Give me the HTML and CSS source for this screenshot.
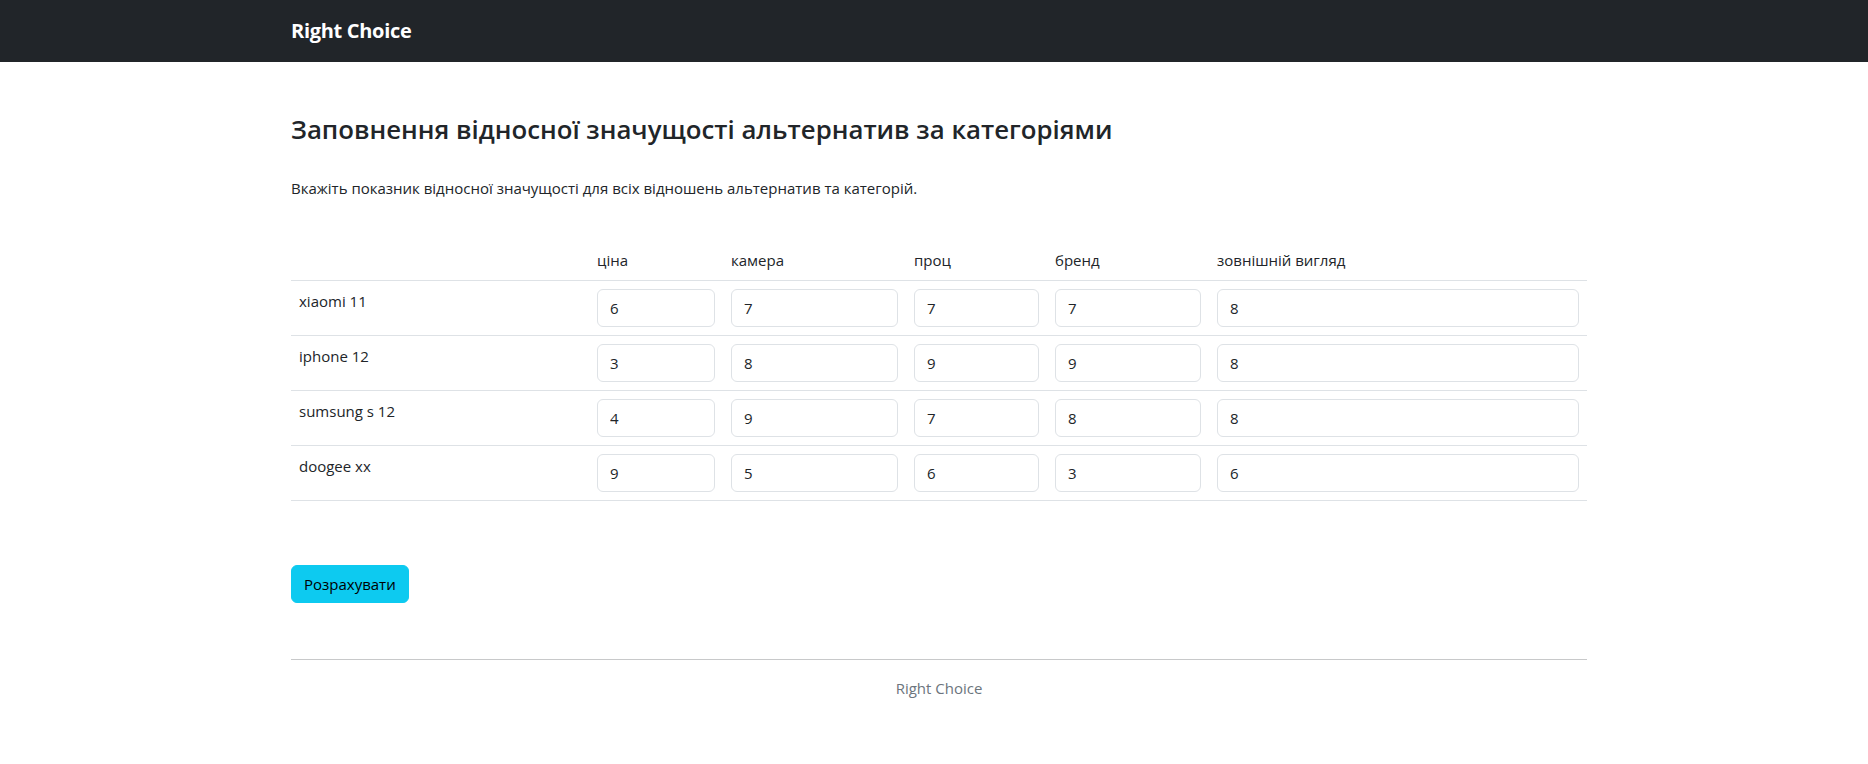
FILE: index.html
```html
<!DOCTYPE html>
<html lang="uk">
<head>
<meta charset="utf-8">
<title>Right Choice</title>
<link rel="stylesheet" href="styles.css">
</head>
<body>
<nav class="navbar">
  <div class="container navbar-inner">
    <a class="brand" href="#">Right Choice</a>
  </div>
</nav>
<main class="container main">
  <h3 class="title">Заповнення відносної значущості альтернатив за категоріями</h3>
  <p class="lead-text">Вкажіть показник відносної значущості для всіх відношень альтернатив та категорій.</p>
  <table class="grid">
    <colgroup>
      <col class="c-name"><col class="c-1"><col class="c-2"><col class="c-3"><col class="c-4"><col class="c-5">
    </colgroup>
    <thead>
      <tr><td></td><td>ціна</td><td>камера</td><td>проц</td><td>бренд</td><td>зовнішній вигляд</td></tr>
    </thead>
    <tbody>
      <tr><td>xiaomi 11</td><td><input class="field" value="6"></td><td><input class="field" value="7"></td><td><input class="field" value="7"></td><td><input class="field" value="7"></td><td><input class="field" value="8"></td></tr>
      <tr><td>iphone 12</td><td><input class="field" value="3"></td><td><input class="field" value="8"></td><td><input class="field" value="9"></td><td><input class="field" value="9"></td><td><input class="field" value="8"></td></tr>
      <tr><td>sumsung s 12</td><td><input class="field" value="4"></td><td><input class="field" value="9"></td><td><input class="field" value="7"></td><td><input class="field" value="8"></td><td><input class="field" value="8"></td></tr>
      <tr><td>doogee xx</td><td><input class="field" value="9"></td><td><input class="field" value="5"></td><td><input class="field" value="6"></td><td><input class="field" value="3"></td><td><input class="field" value="6"></td></tr>
    </tbody>
  </table>
  <button class="btn-info" type="button">Розрахувати</button>
</main>
<footer class="container footer">
  <hr class="rule">
  <p class="footer-text">Right Choice</p>
</footer>
</body>
</html>
```
FILE: styles.css
```css
* { box-sizing: border-box; }
body {
  margin: 0;
  font-family: "Open Sans", "Noto Sans", sans-serif;
  font-size: 15px;
  line-height: 24px;
  color: #212529;
  background: #fff;
}
.container {
  width: 1296px;
  margin-left: calc(50% - 643px);
}
.navbar {
  background: #212529;
  height: 62px;
}
.navbar-inner {
  height: 62px;
  display: flex;
  align-items: center;
}
.brand {
  color: #fff;
  text-decoration: none;
  font-size: 20px;
  font-weight: 700;
  line-height: 30px;
  letter-spacing: -0.3px;
}
.main {
  padding-top: 50px;
}
.title {
  margin: 0;
  font-size: 25.8px;
  line-height: 34px;
  font-weight: 600;
}
.lead-text {
  margin: 30px 0 0;
}
.grid {
  width: 100%;
  table-layout: fixed;
  border-collapse: collapse;
  margin-top: 40px;
}
.c-name { width: 298px; }
.c-1 { width: 134px; }
.c-2 { width: 183px; }
.c-3 { width: 141px; }
.c-4 { width: 162px; }
.c-5 { width: 378px; }
.grid td {
  padding: 8px;
  border-bottom: 1px solid #dee2e6;
  vertical-align: top;
}
.field {
  display: block;
  width: 100%;
  height: 38px;
  padding: 6px 12px;
  font: inherit;
  color: #212529;
  border: 1px solid #dee2e6;
  border-radius: 6px;
  background: #fff;
}
.btn-info {
  margin-top: 64px;
  display: block;
  height: 38px;
  padding: 6px 12px;
  font: inherit;
  color: #000;
  background: #0dcaf0;
  border: 1px solid #0dcaf0;
  border-radius: 6px;
}
.footer {
  padding-top: 56px;
}
.rule {
  margin: 0;
  border: 0;
  border-top: 1px solid #c8c9ca;
}
.footer-text {
  margin: 16px 0;
  text-align: center;
  color: #6c757d;
}
```
